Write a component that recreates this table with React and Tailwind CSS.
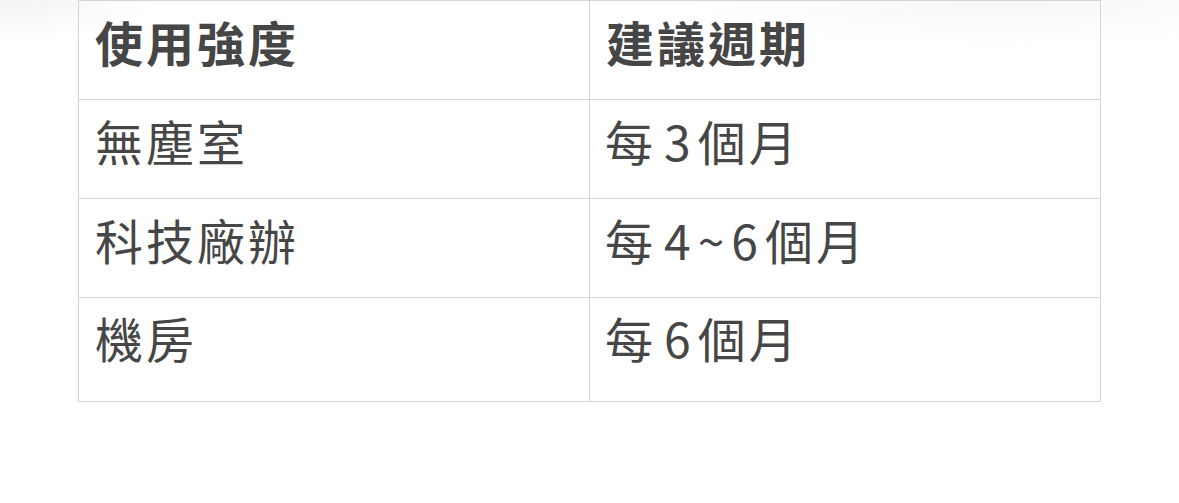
const rows = [
  ["無塵室", "3"],
  ["科技廠辦", "4~6"],
  ["機房", "6"],
];

export default function App() {
  return (
    <div
      className="w-full h-[503px] bg-white bg-[image:radial-gradient(ellipse_150px_40px_at_10px_0px,#f3f3f3,#ffffff00),radial-gradient(ellipse_330px_48px_at_1000px_0px,#f7f7f7,#ffffff00)] px-[78px]"
      style={{ fontFamily: '"Noto Sans CJK TC", "Noto Sans", sans-serif' }}
    >
      <table className="w-full border-collapse table-fixed text-[#464646] text-[48px] leading-none tracking-[3px]">
        <thead>
          <tr className="h-[99px]">
            <th className="w-1/2 border border-[#d4d4d4] text-left font-bold pl-[16px] pb-[18px]">使用強度</th>
            <th className="w-1/2 border border-[#d4d4d4] text-left font-bold pl-[16px] pb-[18px]">建議週期</th>
          </tr>
        </thead>
        <tbody>
          {rows.map(([a, n], i) => {
            const last = i === rows.length - 1;
            return (
              <tr key={i} className={last ? "h-[104px]" : "h-[99px]"}>
                <td className={`border border-[#d4d4d4] pl-[16px] align-middle ${last ? "pb-[25px]" : "pb-[18px]"}`}>{a}</td>
                <td className={`border border-[#d4d4d4] pl-[15px] align-middle ${last ? "pb-[25px]" : "pb-[18px]"}`}>
                  每<span className="ml-[8px] tracking-[7px]">{n}</span>個月
                </td>
              </tr>
            );
          })}
        </tbody>
      </table>
    </div>
  );
}
